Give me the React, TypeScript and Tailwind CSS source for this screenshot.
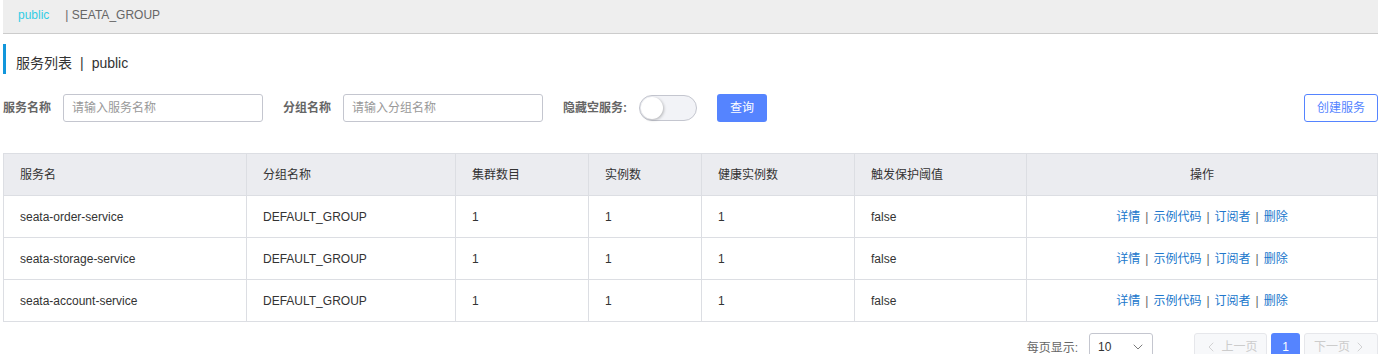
import { ChevronDown, ChevronLeft, ChevronRight } from 'lucide-react'

const rows = [
  { name: 'seata-order-service', group: 'DEFAULT_GROUP' },
  { name: 'seata-storage-service', group: 'DEFAULT_GROUP' },
  { name: 'seata-account-service', group: 'DEFAULT_GROUP' },
]

const cols = [
  { title: '服务名', w: 'w-[243px]' },
  { title: '分组名称', w: 'w-[209px]' },
  { title: '集群数目', w: 'w-[133px]' },
  { title: '实例数', w: 'w-[113px]' },
  { title: '健康实例数', w: 'w-[153px]' },
  { title: '触发保护阈值', w: 'w-[172px]' },
]

function Ops() {
  return (
    <div className="flex items-center justify-center gap-[5px] text-[#2077cc]">
      <span>详情</span>
      <span className="text-[#666]">|</span>
      <span>示例代码</span>
      <span className="text-[#666]">|</span>
      <span>订阅者</span>
      <span className="text-[#666]">|</span>
      <span>删除</span>
    </div>
  )
}

export default function App() {
  return (
    <div className="ml-[3px] w-[1375px] text-[12px] text-[#333] font-['Liberation_Sans','Noto_Sans_CJK_SC',sans-serif]">
      {/* Breadcrumb bar */}
      <div className="flex h-[34px] items-center border-b border-[#ccc] bg-[#eee] pl-[15px] pb-[4px]">
        <span className="text-[#33cde5]">public</span>
        <span className="ml-[16px] text-[#666]">| SEATA_GROUP</span>
      </div>

      {/* Title */}
      <div className="mt-[10px] flex h-[30px] items-center border-l-[3px] border-[#1296db] pl-[10px] pt-[8px] text-[14px] text-[#333]">
        服务列表<span className="mx-[8px]">|</span>public
      </div>

      {/* Filters */}
      <div className="mt-[20px] flex h-[28px] items-center">
        <span className="w-[60px] font-bold text-[#666]">服务名称</span>
        <input
          className="h-[28px] w-[200px] rounded-[3px] border border-[#c4c6cf] px-[8px] text-[12px] outline-none placeholder:text-[#999]"
          placeholder="请输入服务名称"
        />
        <span className="ml-[20px] w-[60px] font-bold text-[#666]">分组名称</span>
        <input
          className="h-[28px] w-[200px] rounded-[3px] border border-[#c4c6cf] px-[8px] text-[12px] outline-none placeholder:text-[#999]"
          placeholder="请输入分组名称"
        />
        <span className="ml-[20px] w-[76px] font-bold text-[#666]">隐藏空服务:</span>
        <div className="flex h-[26px] w-[58px] items-center rounded-full border border-[#c4c6cf] bg-[#f2f3f7] px-[1px]">
          <div className="h-[22px] w-[22px] rounded-full bg-white shadow-[1px_1px_3px_rgba(0,0,0,0.25)]" />
        </div>
        <button className="ml-[20px] h-[28px] w-[50px] rounded-[3px] bg-[#5584ff] text-white">查询</button>
        <button className="ml-auto h-[28px] w-[74px] rounded-[3px] border border-[#5584ff] bg-white text-[#5584ff]">
          创建服务
        </button>
      </div>

      {/* Table */}
      <div className="mt-[31px] border-l border-t border-[#dcdee3]">
        <div className="flex h-[42px] bg-[#ebecf0]">
          {cols.map((c) => (
            <div key={c.title} className={`${c.w} flex items-center border-b border-r border-[#dcdee3] pl-[16px]`}>
              {c.title}
            </div>
          ))}
          <div className="flex flex-1 items-center justify-center border-b border-r border-[#dcdee3]">操作</div>
        </div>
        {rows.map((r) => (
          <div key={r.name} className="flex h-[42px] bg-white">
            {[r.name, r.group, '1', '1', '1', 'false'].map((v, i) => (
              <div key={i} className={`${cols[i].w} flex items-center border-b border-r border-[#dcdee3] pl-[16px]`}>
                {v}
              </div>
            ))}
            <div className="flex flex-1 items-center justify-center border-b border-r border-[#dcdee3]">
              <Ops />
            </div>
          </div>
        ))}
      </div>

      {/* Pagination */}
      <div className="mt-[11px] flex items-start justify-end">
        <span className="mt-[6px] text-[#666]">每页显示:</span>
        <div className="ml-[11px] flex h-[28px] w-[64px] items-center justify-between rounded-[3px] border border-[#c4c6cf] pl-[8px] pr-[6px] text-[#333]">
          <span>10</span>
          <ChevronDown size={16} strokeWidth={1.3} className="text-[#666]" />
        </div>
        <button className="ml-[41px] flex h-[28px] w-[73px] items-center justify-center gap-[2px] rounded-[3px] border border-[#e6e7eb] bg-[#f7f8fa] text-[#ccc]">
          <ChevronLeft size={16} strokeWidth={1.3} />
          上一页
        </button>
        <button className="ml-[4px] h-[28px] w-[29px] rounded-[3px] bg-[#5584ff] text-white">1</button>
        <button className="ml-[4px] flex h-[28px] w-[74px] items-center justify-center gap-[2px] rounded-[3px] border border-[#e6e7eb] bg-[#f7f8fa] text-[#ccc]">
          下一页
          <ChevronRight size={16} strokeWidth={1.3} />
        </button>
      </div>
    </div>
  )
}
